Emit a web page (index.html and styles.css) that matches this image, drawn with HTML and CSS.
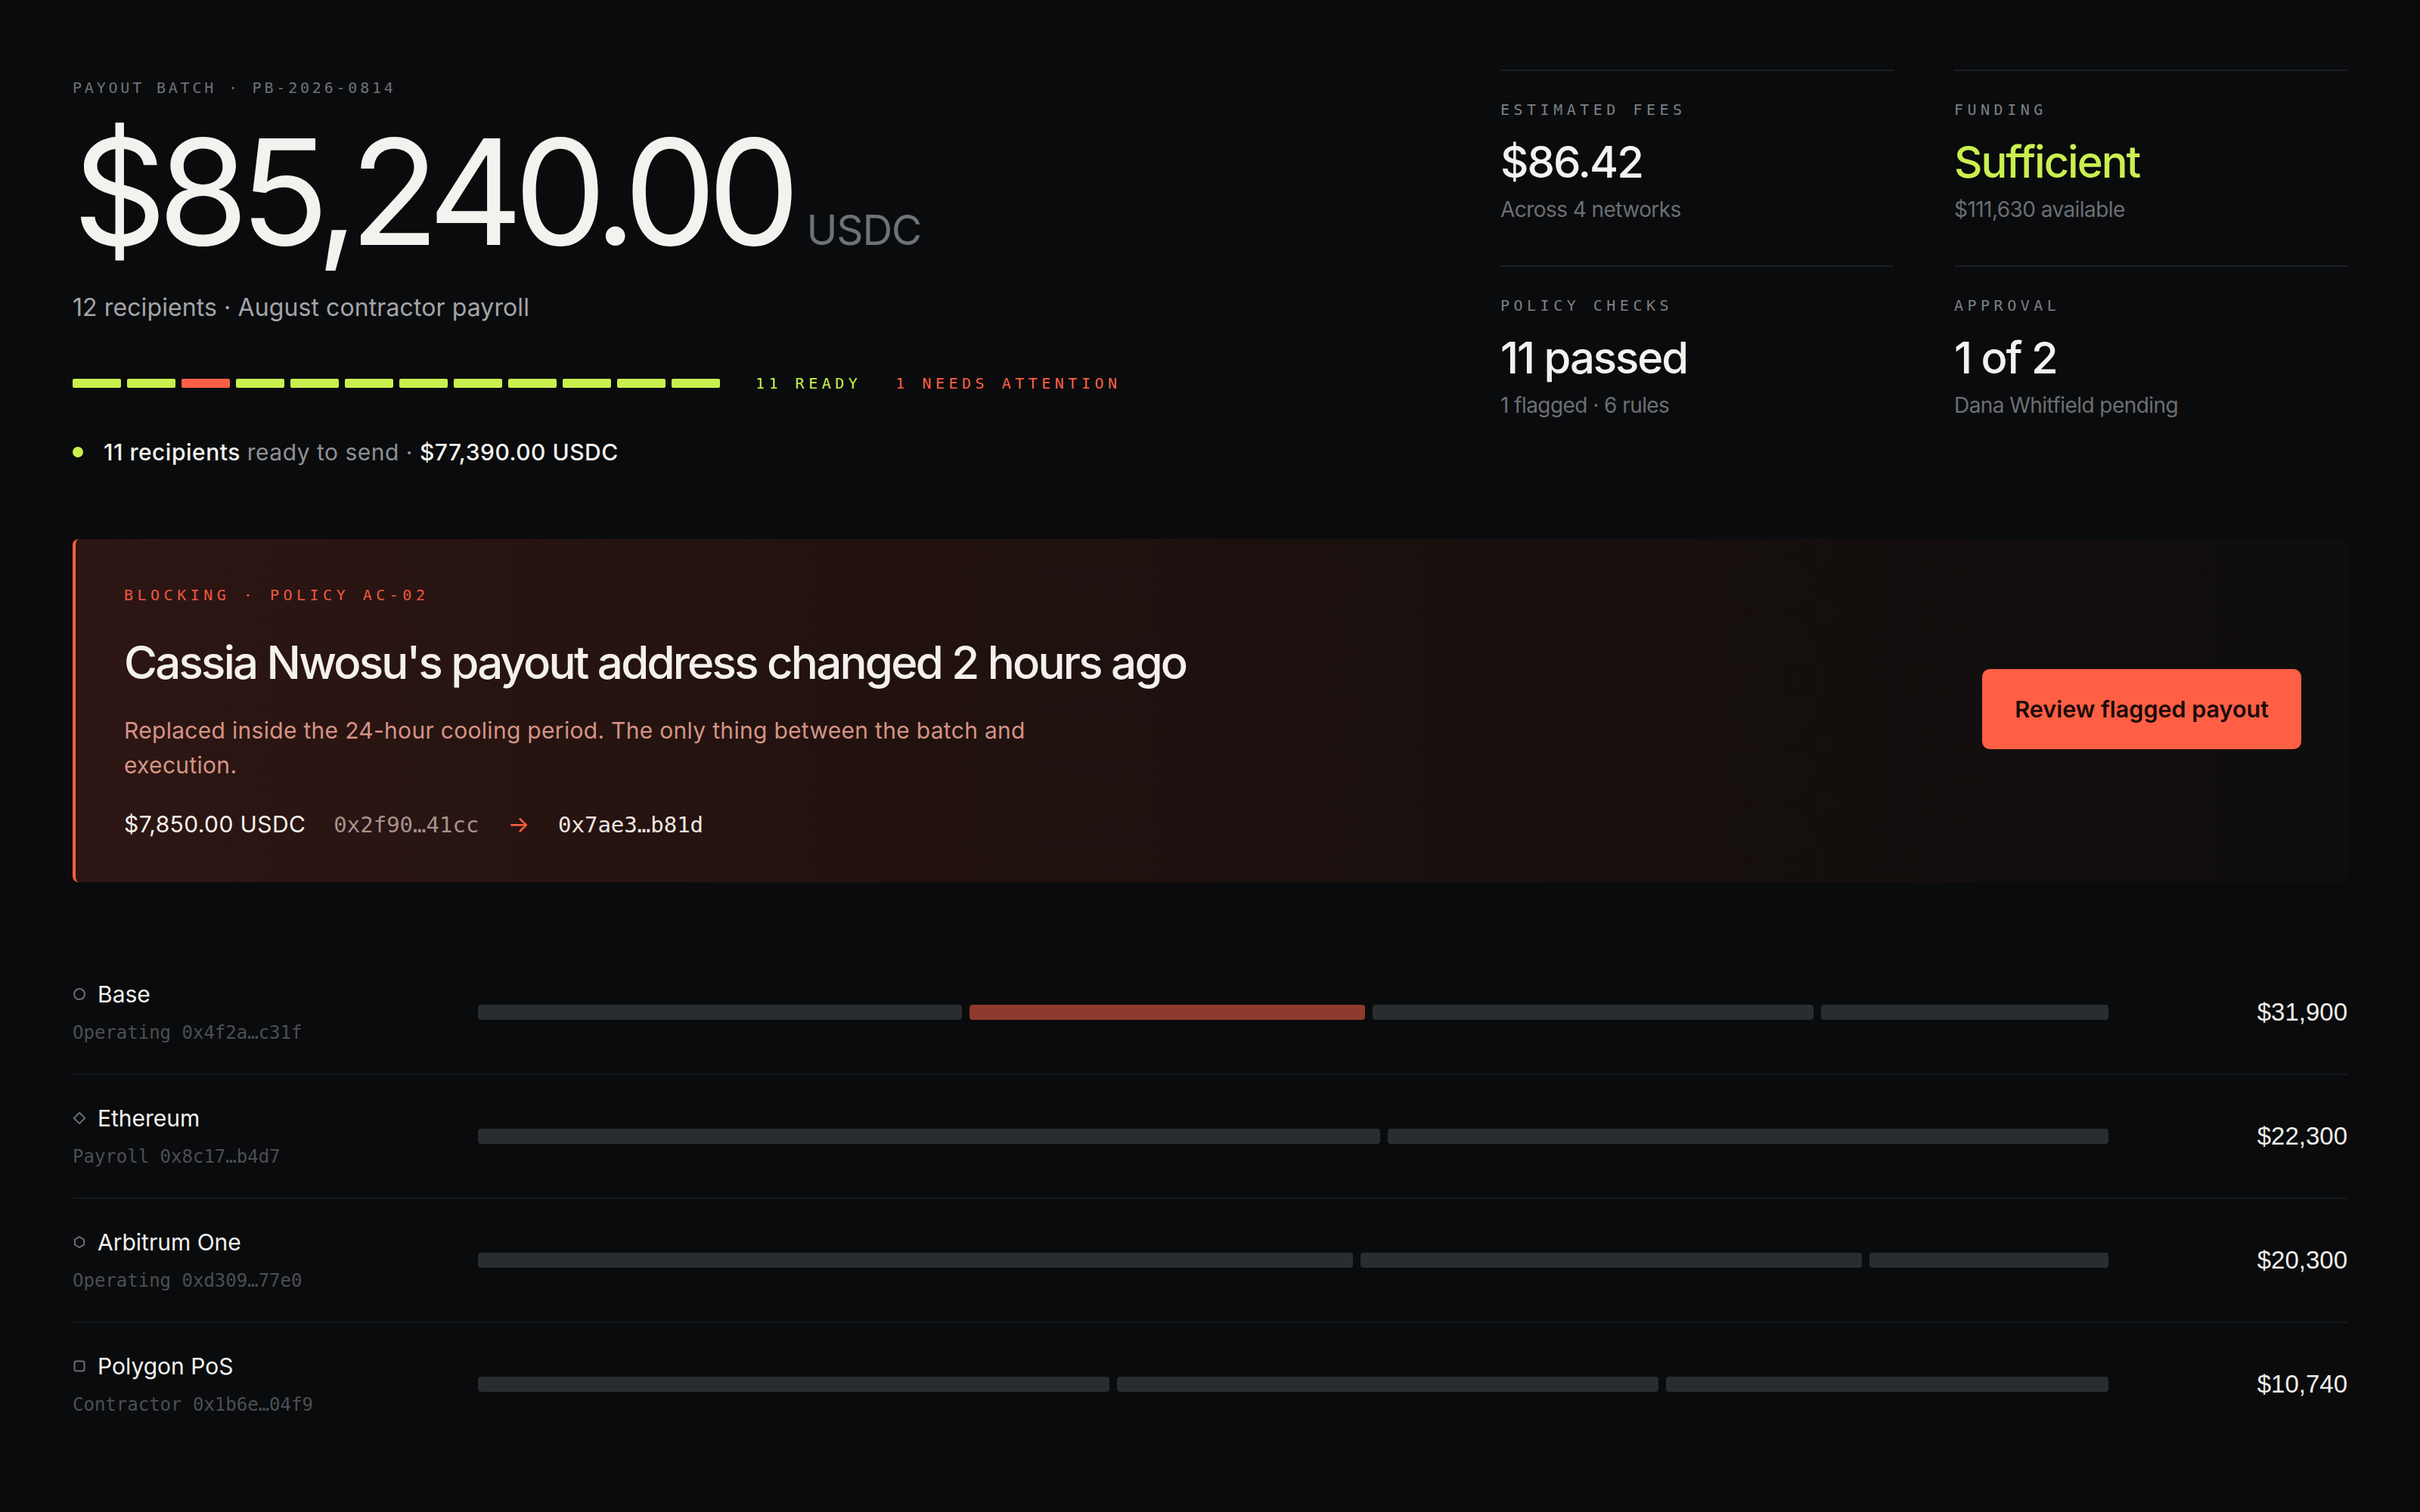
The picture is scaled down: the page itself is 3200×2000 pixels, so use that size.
FILE: index.html
```html
<!DOCTYPE html>
<html lang="en">
<head>
<meta charset="utf-8">
<title>Payout batch PB-2026-0814</title>
<link rel="stylesheet" href="styles.css">
</head>
<body>
<main class="page">
  <section class="hero">
    <div class="summary">
      <div class="eyebrow">PAYOUT BATCH · PB-2026-0814</div>
      <div class="total">
        <span class="total-amount">$85,240.00</span>
        <span class="total-unit">USDC</span>
      </div>
      <p class="total-note">12 recipients · August contractor payroll</p>
      <div class="readiness">
        <div class="pips">
          <span class="pip ok"></span><span class="pip ok"></span><span class="pip flag"></span><span class="pip ok"></span>
          <span class="pip ok"></span><span class="pip ok"></span><span class="pip ok"></span><span class="pip ok"></span>
          <span class="pip ok"></span><span class="pip ok"></span><span class="pip ok"></span><span class="pip ok"></span>
        </div>
        <span class="legend legend-ready">11 READY</span>
        <span class="legend legend-attention">1 NEEDS ATTENTION</span>
      </div>
      <p class="ready-line"><span class="dot"></span><span><strong>11 recipients</strong> ready to send · <strong>$77,390.00 USDC</strong></span></p>
    </div>

    <dl class="stats">
      <div class="stat">
        <dt class="stat-label">ESTIMATED FEES</dt>
        <dd class="stat-value">$86.42</dd>
        <dd class="stat-sub">Across 4 networks</dd>
      </div>
      <div class="stat">
        <dt class="stat-label">FUNDING</dt>
        <dd class="stat-value good">Sufficient</dd>
        <dd class="stat-sub">$111,630 available</dd>
      </div>
      <div class="stat">
        <dt class="stat-label">POLICY CHECKS</dt>
        <dd class="stat-value">11 passed</dd>
        <dd class="stat-sub">1 flagged · 6 rules</dd>
      </div>
      <div class="stat">
        <dt class="stat-label">APPROVAL</dt>
        <dd class="stat-value">1 of 2</dd>
        <dd class="stat-sub">Dana Whitfield pending</dd>
      </div>
    </dl>
  </section>

  <section class="alert">
    <div class="alert-body">
      <div class="alert-tag">BLOCKING · POLICY AC-02</div>
      <h2 class="alert-title">Cassia Nwosu's payout address changed 2 hours ago</h2>
      <p class="alert-desc">Replaced inside the 24-hour cooling period. The only thing between the batch and execution.</p>
      <div class="alert-meta">
        <span class="meta-amount">$7,850.00 USDC</span>
        <span class="addr addr-old">0x2f90…41cc</span>
        <span class="addr-arrow">→</span>
        <span class="addr addr-new">0x7ae3…b81d</span>
      </div>
    </div>
    <button class="alert-action" type="button">Review flagged payout</button>
  </section>

  <section class="networks">
    <div class="net-row">
      <div class="net-info">
        <div class="net-name">
          <svg class="net-icon" viewBox="0 0 18 18"><circle cx="9" cy="9" r="7" /></svg>
          Base
        </div>
        <div class="net-wallet">Operating 0x4f2a…c31f</div>
      </div>
      <div class="net-bar">
        <span class="seg" style="flex-grow:9600"></span>
        <span class="seg seg-flag" style="flex-grow:7850"></span>
        <span class="seg" style="flex-grow:8750"></span>
        <span class="seg" style="flex-grow:5700"></span>
      </div>
      <div class="net-amount">$31,900</div>
    </div>

    <div class="net-row">
      <div class="net-info">
        <div class="net-name">
          <svg class="net-icon" viewBox="0 0 18 18"><path d="M9 1.8 L16.2 9 L9 16.2 L1.8 9 Z" /></svg>
          Ethereum
        </div>
        <div class="net-wallet">Payroll 0x8c17…b4d7</div>
      </div>
      <div class="net-bar">
        <span class="seg" style="flex-grow:12400"></span>
        <span class="seg" style="flex-grow:9900"></span>
      </div>
      <div class="net-amount">$22,300</div>
    </div>

    <div class="net-row">
      <div class="net-info">
        <div class="net-name">
          <svg class="net-icon" viewBox="0 0 18 18"><path d="M9 2 L15 5.5 L15 12.5 L9 16 L3 12.5 L3 5.5 Z" /></svg>
          Arbitrum One
        </div>
        <div class="net-wallet">Operating 0xd309…77e0</div>
      </div>
      <div class="net-bar">
        <span class="seg" style="flex-grow:11000"></span>
        <span class="seg" style="flex-grow:6300"></span>
        <span class="seg" style="flex-grow:3000"></span>
      </div>
      <div class="net-amount">$20,300</div>
    </div>

    <div class="net-row">
      <div class="net-info">
        <div class="net-name">
          <svg class="net-icon" viewBox="0 0 18 18"><rect x="2.5" y="2.5" width="13" height="13" rx="2.5" /></svg>
          Polygon PoS
        </div>
        <div class="net-wallet">Contractor 0x1b6e…04f9</div>
      </div>
      <div class="net-bar">
        <span class="seg" style="flex-grow:4200"></span>
        <span class="seg" style="flex-grow:3600"></span>
        <span class="seg" style="flex-grow:2940"></span>
      </div>
      <div class="net-amount">$10,740</div>
    </div>
  </section>
</main>
</body>
</html>
```

FILE: styles.css
```css
* { box-sizing: border-box; }

html, body {
  margin: 0;
  background: #0a0b0d;
  color: #f2f2ee;
  font-family: "Inter", "Noto Sans", sans-serif;
}

.page {
  padding: 92px 96px 80px;
}

/* ---------- Summary header ---------- */
.hero {
  display: grid;
  grid-template-columns: 1fr 1120px;
  column-gap: 80px;
  align-items: start;
}

.eyebrow {
  margin-top: 12px;
  font-family: "DejaVu Sans Mono", monospace;
  font-size: 20px;
  line-height: 24px;
  letter-spacing: 3.8px;
  color: #6f7378;
}

.total {
  display: flex;
  align-items: baseline;
  gap: 20px;
  margin-top: 29px;
}

.total-amount {
  font-size: 194px;
  line-height: 1;
  font-weight: 400;
  letter-spacing: -0.06em;
  color: #f2f2ee;
}

.total-unit {
  font-size: 55px;
  line-height: 1;
  letter-spacing: -0.02em;
  color: #6e7277;
}

.total-note {
  margin: 35px 0 0;
  font-size: 32px;
  line-height: 1.3;
  letter-spacing: 0.1px;
  color: #a2a5a9;
}

.readiness {
  display: flex;
  align-items: center;
  margin-top: 67px;
  height: 24px;
}

.pips {
  display: flex;
  gap: 8px;
  margin-right: 47px;
}

.pip {
  width: 64px;
  height: 12px;
  border-radius: 2px;
  background: #c9f04e;
}

.pip.flag { background: #ff5f45; }

.legend {
  font-family: "DejaVu Sans Mono", monospace;
  font-size: 20px;
  line-height: 24px;
  letter-spacing: 5.5px;
}

.legend-ready { color: #c9f04e; margin-right: 45px; }
.legend-attention { color: #ff5f45; }

.ready-line {
  display: flex;
  align-items: center;
  gap: 27px;
  margin: 59px 0 0;
  font-size: 30px;
  line-height: 40px;
  letter-spacing: 0.5px;
  color: #8d9195;
}

.ready-line strong {
  font-weight: 500;
  color: #f2f2ee;
}

.dot {
  width: 14px;
  height: 14px;
  border-radius: 50%;
  background: #c9f04e;
  flex: none;
}

/* ---------- Stat grid ---------- */
.stats {
  display: grid;
  grid-template-columns: 1fr 1fr;
  align-content: start;
  column-gap: 80px;
  margin: 0;
}

.stat {
  border-top: 2px solid #1b1e21;
  padding: 39px 0 52px;
  height: 259px;
}

.stat dd { margin: 0; }

.stat-label {
  font-family: "DejaVu Sans Mono", monospace;
  font-size: 20px;
  line-height: 24px;
  letter-spacing: 5.5px;
  color: #7d8185;
}

.stat-value {
  margin-top: 23px !important;
  font-size: 58px;
  line-height: 1.2;
  font-weight: 500;
  letter-spacing: -0.035em;
  color: #f2f2ee;
}

.stat-value.good { color: #c9f04e; }

.stat-sub {
  margin-top: 8px !important;
  font-size: 28px;
  line-height: 1.4;
  letter-spacing: -0.02em;
  color: #6b6f73;
}

/* ---------- Blocking alert ---------- */
.alert {
  display: flex;
  align-items: center;
  justify-content: space-between;
  margin-top: 95px;
  padding: 62px 61px 56px 64px;
  border-left: 4px solid #ff5f45;
  border-radius: 8px;
  background: linear-gradient(90deg, #2d1613 0%, #22120f 35%, #160f0e 70%, #0f0d0d 100%);
}

.alert-tag {
  font-family: "DejaVu Sans Mono", monospace;
  font-size: 20px;
  line-height: 24px;
  letter-spacing: 5.5px;
  color: #f0583e;
}

.alert-title {
  margin: 41px 0 0;
  font-size: 60px;
  line-height: 1.2;
  font-weight: 500;
  letter-spacing: -0.046em;
  color: #f4f1ec;
}

.alert-desc {
  max-width: 1260px;
  margin: 31px 0 0;
  font-size: 30px;
  line-height: 46px;
  letter-spacing: 0.3px;
  color: #d49486;
}

.alert-meta {
  display: flex;
  align-items: baseline;
  margin-top: 35px;
  line-height: 40px;
}

.meta-amount {
  font-size: 30px;
  letter-spacing: 0.4px;
  color: #f4f1ec;
  margin-right: 37px;
}

.addr {
  font-family: "DejaVu Sans Mono", monospace;
  font-size: 29px;
}

.addr-old { color: #a6928d; }
.addr-new { color: #efe6e1; }

.addr-arrow {
  margin: 0 38px;
  font-size: 30px;
  color: #ff5f45;
}

.alert-action {
  flex: none;
  margin-bottom: 10px;
  padding: 32px 43px;
  border: 0;
  border-radius: 10px;
  background: #ff5f45;
  color: #1a0b07;
  font-family: "Inter", sans-serif;
  font-size: 30.5px;
  line-height: 42px;
  font-weight: 600;
  letter-spacing: 0;
}

/* ---------- Network breakdown ---------- */
.networks {
  margin-top: 91px;
}

.net-row {
  display: grid;
  grid-template-columns: 480px 1fr 260px;
  column-gap: 56px;
  align-items: center;
  padding: 39px 0;
}

.net-row + .net-row {
  border-top: 2px solid #15181b;
}

.net-name {
  display: flex;
  align-items: center;
  gap: 15px;
  font-size: 30px;
  line-height: 36px;
  letter-spacing: 0;
  color: #f2f2ee;
}

.net-icon {
  width: 18px;
  height: 18px;
  flex: none;
  fill: none;
  stroke: #6b6f73;
  stroke-width: 2;
}

.net-wallet {
  margin-top: 18px;
  font-family: "DejaVu Sans Mono", monospace;
  font-size: 24px;
  line-height: 30px;
  color: #4b4f53;
}

.net-bar {
  display: flex;
  gap: 10px;
}

.seg {
  flex-basis: 0;
  height: 20px;
  border-radius: 4px;
  background: #2a2d30;
}

.seg-flag { background: #8e3a2c; }

.net-amount {
  text-align: right;
  font-family: "Liberation Sans", Arial, sans-serif;
  font-size: 33px;
  color: #eeeeea;
}
```
